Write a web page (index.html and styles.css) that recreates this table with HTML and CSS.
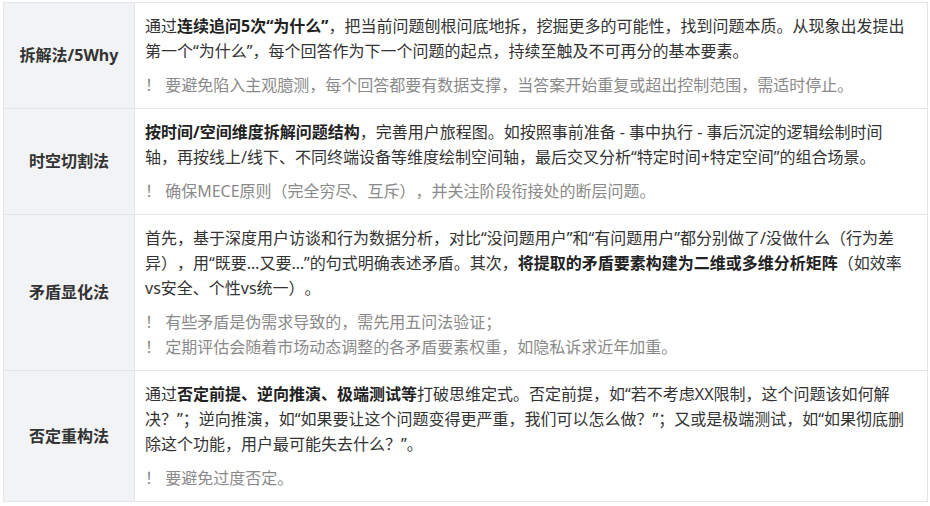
FILE: index.html
```html
<!DOCTYPE html>
<html lang="zh-CN">
<head>
    <meta charset="UTF-8">
    <title>问题拆解方法</title>
    <link rel="stylesheet" href="styles.css">
</head>
<body>
    <table class="method-table">
        <tbody>
            <tr>
                <th>拆解法/5Why</th>
                <td>
                    <p>通过<b>连续追问5次“为什么”</b>，把当前问题刨根问底地拆，挖掘更多的可能性，找到问题本质。从现象出发提出第一个“为什么”，每个回答作为下一个问题的起点，持续至触及不可再分的基本要素。</p>
                    <p class="note">！ 要避免陷入主观臆测，每个回答都要有数据支撑，当答案开始重复或超出控制范围，需适时停止。</p>
                </td>
            </tr>
            <tr>
                <th>时空切割法</th>
                <td>
                    <p><b>按时间/空间维度拆解问题结构</b>，完善用户旅程图。如按照事前准备 - 事中执行 - 事后沉淀的逻辑绘制时间轴，再按线上/线下、不同终端设备等维度绘制空间轴，最后交叉分析“特定时间+特定空间”的组合场景。</p>
                    <p class="note">！ 确保MECE原则（完全穷尽、互斥），并关注阶段衔接处的断层问题。</p>
                </td>
            </tr>
            <tr>
                <th>矛盾显化法</th>
                <td>
                    <p>首先，基于深度用户访谈和行为数据分析，对比“没问题用户”和“有问题用户”都分别做了/没做什么（行为差异），用“既要…又要…”的句式明确表述矛盾。其次，<b>将提取的矛盾要素构建为二维或多维分析矩阵</b>（如效率vs安全、个性vs统一）。</p>
                    <p class="note">！ 有些矛盾是伪需求导致的，需先用五问法验证；<br>！ 定期评估会随着市场动态调整的各矛盾要素权重，如隐私诉求近年加重。</p>
                </td>
            </tr>
            <tr>
                <th>否定重构法</th>
                <td>
                    <p>通过<b>否定前提、逆向推演、极端测试等</b>打破思维定式。否定前提，如“若不考虑XX限制，这个问题该如何解决？”；逆向推演，如“如果要让这个问题变得更严重，我们可以怎么做？”；又或是极端测试，如“如果彻底删除这个功能，用户最可能失去什么？”。</p>
                    <p class="note">！ 要避免过度否定。</p>
                </td>
            </tr>
        </tbody>
    </table>
</body>
</html>
```

FILE: styles.css
```css
body {
    font-family: "Noto Sans", "Noto Sans CJK SC", sans-serif;
    background-color: #fff;
    color: #333;
    margin: 0;
    padding: 2px 3px;
}

.method-table {
    width: 925px;
    border-collapse: collapse;
    border: 1px solid #e3e5e8;
    font-size: 16px;
    line-height: 25px;
    text-spacing-trim: space-all;
}

.method-table th,
.method-table td {
    border: 1px solid #e3e5e8;
    vertical-align: middle;
}

.method-table th {
    width: 110px;
    padding: 0 10px;
    background-color: #f2f3f5;
    font-weight: bold;
    text-align: center;
    color: #333;
}

.method-table td {
    padding: 11px 15px 10px 10px;
    text-align: left;
}

.method-table p {
    margin: 0;
}

.method-table p + p {
    margin-top: 9px;
}

.method-table b {
    font-weight: bold;
    color: #222;
}

.note {
    color: #8a8a8a;
}
```
